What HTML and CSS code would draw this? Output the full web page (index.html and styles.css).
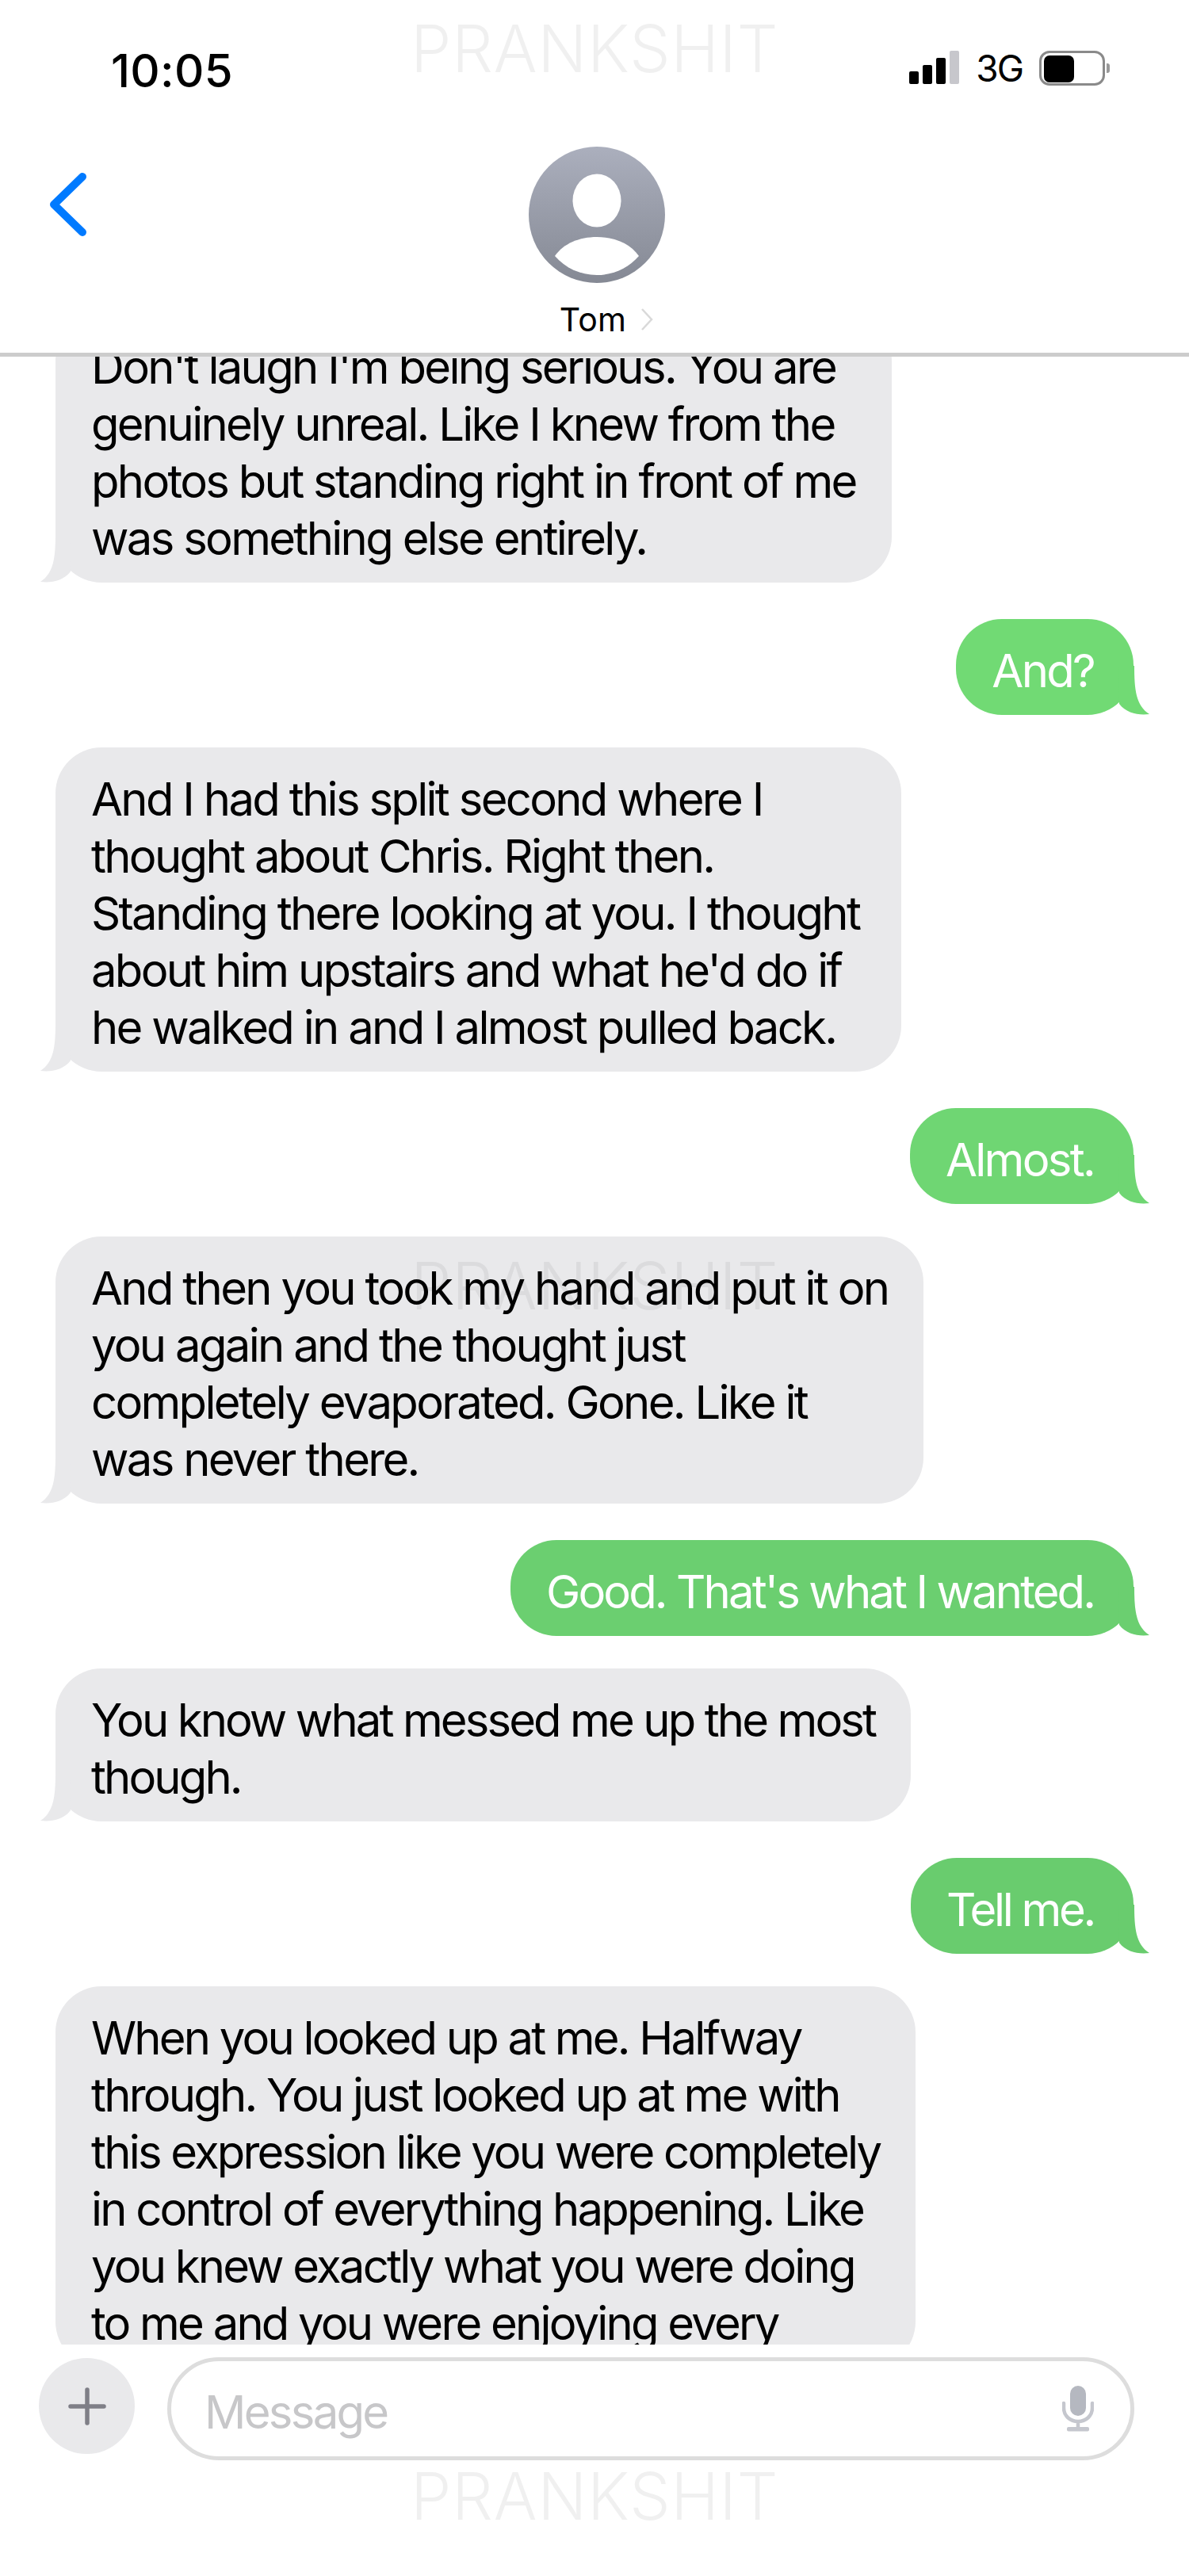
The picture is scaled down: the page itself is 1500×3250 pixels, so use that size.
FILE: index.html
```html
<!DOCTYPE html>
<html lang="en">
<head>
<meta charset="utf-8">
<title>Tom</title>
<link rel="stylesheet" href="styles.css">
</head>
<body>
<div class="phone">
  <svg width="0" height="0" class="defs" aria-hidden="true">
    <symbol id="tail" viewBox="0 0 40 62">
      <path d="M0 0H20C20 30 22 50 39 61C25 62.5 10 60 1 48Z"/>
    </symbol>
  </svg>
  <header class="top">
    <div class="status">
      <span class="time">10:05</span>
      <div class="status-right">
        <div class="signal">
          <i class="bar b1"></i><i class="bar b2"></i><i class="bar b3"></i><i class="bar b4"></i>
        </div>
        <span class="net">3G</span>
        <div class="battery"><div class="battery-body"><div class="battery-fill"></div></div><div class="battery-nub"></div></div>
      </div>
    </div>
    <nav class="nav">
      <svg class="back" width="46" height="80" viewBox="0 0 46 80"><path d="M41 5L5 40L41 75"/></svg>
      <div class="contact">
        <svg class="avatar" width="172" height="172" viewBox="0 0 172 172">
          <defs><linearGradient id="ag" x1="0" y1="0" x2="0" y2="1"><stop offset="0" stop-color="#abafbd"/><stop offset="1" stop-color="#858994"/></linearGradient></defs>
          <circle cx="86" cy="86" r="86" fill="url(#ag)"/>
          <ellipse cx="86" cy="68" rx="30.5" ry="33.5" fill="#fff"/>
          <path d="M33 138C44 122 64 114 86 114C108 114 128 122 139 138C126 153 107 162 86 162C65 162 46 153 33 138Z" fill="#fff"/>
        </svg>
        <div class="name-row">
          <span class="name">Tom</span>
          <svg class="chev" width="16" height="28" viewBox="0 0 16 28"><path d="M2 1L14 14L2 27"/></svg>
        </div>
      </div>
    </nav>
  </header>

  <main class="thread">
    <div class="msg in first">Don't laugh I'm being serious. You are<br>genuinely unreal. Like I knew from the<br>photos but standing right in front of me<br>was something else entirely.<svg class="tail"><use href="#tail"/></svg></div>
    <div class="msg out g1">And?<svg class="tail"><use href="#tail"/></svg></div>
    <div class="msg in roomy">And I had this split second where I<br>thought about Chris. Right then.<br>Standing there looking at you. I thought<br>about him upstairs and what he'd do if<br>he walked in and I almost pulled back.<svg class="tail"><use href="#tail"/></svg></div>
    <div class="msg out g2">Almost.<svg class="tail"><use href="#tail"/></svg></div>
    <div class="msg in">And then you took my hand and put it on<br>you again and the thought just<br>completely evaporated. Gone. Like it<br>was never there.<svg class="tail"><use href="#tail"/></svg></div>
    <div class="msg out g3 tight">Good. That's what I wanted.<svg class="tail"><use href="#tail"/></svg></div>
    <div class="msg in tight">You know what messed me up the most<br>though.<svg class="tail"><use href="#tail"/></svg></div>
    <div class="msg out g4 tighter">Tell me.<svg class="tail"><use href="#tail"/></svg></div>
    <div class="msg in snug">When you looked up at me. Halfway<br>through. You just looked up at me with<br>this expression like you were completely<br>in control of everything happening. Like<br>you knew exactly what you were doing<br>to me and you were enjoying every</div>
  </main>

  <footer class="composer">
    <div class="plus"><svg width="48" height="48" viewBox="0 0 48 48"><path d="M24 3V45M3 24H45"/></svg></div>
    <div class="field">
      <span class="placeholder">Message</span>
      <svg class="mic" width="40" height="58" viewBox="0 0 40 58">
        <rect class="mic-head" x="10" y="0" width="20" height="38" rx="10"/>
        <path class="mic-arm" d="M2 22V28C2 38 10 45 20 45C30 45 38 38 38 28V22M20 45V54"/>
        <rect class="mic-base" x="6" y="52" width="28" height="5.5" rx="2"/>
      </svg>
    </div>
  </footer>

  <div class="mark mark-top">PRANKSHIT</div>
  <div class="mark mark-mid">PRANKSHIT</div>
  <div class="mark mark-bot">PRANKSHIT</div>
</div>
</body>
</html>
```

FILE: styles.css
```css
* { box-sizing: border-box; }
html, body { margin: 0; padding: 0; background: #fff; }
body { font-family: Inter, "Liberation Sans", sans-serif; color: #000; }
.phone { position: relative; width: 1500px; height: 3250px; overflow: hidden; background: #fff; }
.defs { position: absolute; }

.top { height: 450px; border-bottom: 5px solid #ccc; display: flex; flex-direction: column; }
.status { display: flex; justify-content: space-between; align-items: flex-start; padding: 54px 100px 0 140px; height: 185px; }
.time { font-size: 58px; line-height: 70px; font-weight: 500; letter-spacing: 0.3px; }
.status-right { display: flex; align-items: flex-start; padding-top: 10px; }
.signal { display: flex; align-items: flex-end; gap: 5px; height: 42px; }
.bar { display: block; width: 12px; border-radius: 2px; background: #000; }
.b1 { height: 16px; }
.b2 { height: 24px; }
.b3 { height: 33px; }
.b4 { height: 42px; background: #c7c7cc; }
.net { font-size: 46px; line-height: 44px; margin: 0 21px 0 21px; letter-spacing: -2px; }
.battery { display: flex; align-items: center; height: 44px; }
.battery-body { width: 83px; height: 44px; border: 3px solid #8a8a8a; border-radius: 13px; padding: 3px; }
.battery-fill { width: 38px; height: 34px; background: #000; border-radius: 7px; }
.battery-nub { width: 4px; height: 12px; margin-left: 2px; background: #999; border-radius: 0 3px 3px 0; }

.nav { position: relative; flex: 1; display: flex; justify-content: center; }
.back { position: absolute; left: 63px; top: 33px; fill: none; stroke: #007aff; stroke-width: 10; stroke-linecap: round; stroke-linejoin: round; }
.contact { display: flex; flex-direction: column; align-items: center; width: 172px; margin-left: 6px; }
.avatar { display: block; flex: none; }
.name-row { display: flex; align-items: center; gap: 18px; margin-top: 26px; margin-left: 24px; white-space: nowrap; }
.name { font-size: 41px; line-height: 40px; letter-spacing: 0.2px; }
.chev { fill: none; stroke: #d9d9d9; stroke-width: 2.5; }

.thread { height: 2508px; overflow: hidden; display: flex; flex-direction: column; align-items: flex-start; padding: 0 70px; }
.msg { position: relative; width: fit-content; flex: none; padding: 28.5px 45px 20.5px; font-size: 58px; line-height: 72px; letter-spacing: -2.7px; white-space: nowrap; border-radius: 58px; }
.in { background: #e9e9eb; color: #000; margin-top: 41px; fill: #e9e9eb; }
.out { align-self: flex-end; color: #fff; margin-top: 46px; padding-right: 50px; }
.first { margin-top: -52px; }
.roomy { padding-right: 53px; }
.tight { letter-spacing: -2.9px; }
.snug { letter-spacing: -2.8px; }
.tighter { letter-spacing: -3.3px; }
.tail { position: absolute; bottom: 0; width: 40px; height: 62px; }
.out .tail { right: -21px; }
.in .tail { left: -20px; transform: scaleX(-1); }
.g1 { background: #71da74; fill: #71da74; }
.g2 { background: #6fd673; fill: #6fd673; }
.g3 { background: #6bcf70; fill: #6bcf70; }
.g4 { background: #69cc6e; fill: #69cc6e; }

.composer { display: flex; align-items: flex-start; padding: 16px 69px 0 49px; }
.plus { width: 121px; height: 121px; border-radius: 50%; background: #e9e9eb; display: flex; align-items: center; justify-content: center; margin-top: 1px; flex: none; }
.plus svg { fill: none; stroke: #7f7f87; stroke-width: 5.5; stroke-linecap: round; }
.field { flex: 1; height: 130px; margin-left: 41px; border: 5px solid #ddd; border-radius: 65px; display: flex; align-items: center; justify-content: space-between; padding: 0 46px 0 42px; }
.placeholder { font-size: 58px; line-height: 72px; color: #c7c7c9; letter-spacing: -2.7px; position: relative; top: 4px; }
.mic-head { fill: #b5b8c0; }
.mic-arm { fill: none; stroke: #c5c7ce; stroke-width: 4.5; stroke-linecap: round; }
.mic-base { fill: #c5c7ce; }

.mark { position: absolute; left: 0; width: 1500px; text-align: center; font-size: 82px; line-height: 80px; font-weight: 300; color: rgba(0,0,0,.06); letter-spacing: 0.5px; pointer-events: none; }
.mark-top { top: 22px; }
.mark-mid { top: 1583px; }
.mark-bot { top: 3110px; }
```
